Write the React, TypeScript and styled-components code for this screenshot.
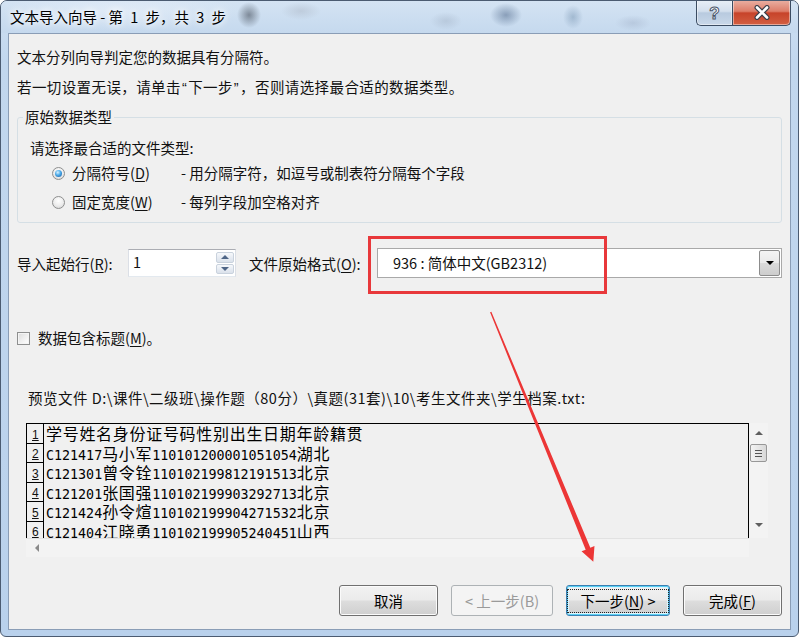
import React from "react";
import styled, { createGlobalStyle } from "styled-components";

const UI_FONT = `"Noto Sans CJK SC", "Noto Sans", sans-serif`;

const Global = createGlobalStyle`
  html, body { margin: 0; padding: 0; background: #ffffff; }
  body { font-family: ${UI_FONT}; }
  * { box-sizing: border-box; }
`;

const Window = styled.div`
  position: relative;
  width: 799px;
  height: 637px;
  display: flex;
  flex-direction: column;
  border: 1px solid #4b5b71;
  border-radius: 7px 7px 6px 6px;
  overflow: hidden;
  font-family: ${UI_FONT};
  color: #111;
  background: linear-gradient(180deg, #cfe0f2 0%, #c2d7ee 60px, #b9d1ec 100%);
`;

const TitleBar = styled.div`
  height: 32px;
  flex: none;
  display: flex;
  justify-content: space-between;
  align-items: flex-start;
  background:
    radial-gradient(ellipse 12px 13px at 248px 14px, rgba(60, 68, 80, 0.55), transparent),
    radial-gradient(ellipse 20px 9px at 300px 10px, rgba(170, 180, 195, 0.45), transparent),
    radial-gradient(ellipse 16px 9px at 445px 20px, rgba(150, 165, 185, 0.35), transparent),
    radial-gradient(ellipse 16px 12px at 505px 14px, rgba(70, 95, 130, 0.5), transparent),
    radial-gradient(ellipse 10px 12px at 572px 16px, rgba(110, 140, 170, 0.45), transparent),
    radial-gradient(ellipse 18px 8px at 632px 22px, rgba(150, 165, 190, 0.35), transparent),
    radial-gradient(ellipse 120px 20px at 120px 10px, rgba(235, 242, 250, 0.6), transparent),
    linear-gradient(180deg, #d4e3f3 0%, #c5d9ee 100%);
`;

const Title = styled.div`
  margin: 6px 0 0 9px;
  font-size: 14.5px;
  line-height: 20px;
  color: #000;
  white-space: pre;
  text-shadow: 0 0 6px #ffffff, 0 0 10px #ffffff;
`;

const Captions = styled.div`
  display: flex;
  margin: -1px 7px 0 0;
`;

const CapButton = styled.div<{ $kind: "help" | "close" }>`
  height: 26px;
  width: ${(p) => (p.$kind === "close" ? 59 : 36)}px;
  display: flex;
  align-items: center;
  justify-content: center;
  border: 1px solid #3b4c62;
  border-top: none;
  border-right: ${(p) => (p.$kind === "help" ? "none" : "1px solid #3b4c62")};
  border-radius: ${(p) => (p.$kind === "close" ? "0 0 5px 0" : "0 0 0 5px")};
  box-shadow: inset 0 0 0 1px rgba(255, 255, 255, 0.45);
  background: ${(p) =>
    p.$kind === "close"
      ? "linear-gradient(180deg, #eab1a4 0%, #dd7d69 45%, #c7432a 52%, #d35f42 100%)"
      : "linear-gradient(180deg, #e8eff7 0%, #d3dfed 45%, #b8cadf 52%, #c9d8e9 100%)"};
`;

const HelpGlyph = styled.span`
  font-family: "Liberation Sans", sans-serif;
  font-weight: bold;
  font-size: 17px;
  line-height: 1;
  color: #ffffff;
  -webkit-text-stroke: 1px #4b5669;
  margin-top: 1px;
`;

const Client = styled.div`
  flex: 1;
  margin: 0 7px 6px 7px;
  border: 1px solid #8a9db6;
  background: #f0f0f0;
  display: flex;
  flex-direction: column;
  padding: 13px 8px 13px 8px;
`;

const TextLine = styled.div<{ $mt: number; $indent?: number; $spacing?: number }>`
  margin-top: ${(p) => p.$mt}px;
  padding-left: ${(p) => p.$indent ?? 0}px;
  letter-spacing: ${(p) => p.$spacing ?? 0}px;
  height: 20px;
  line-height: 20px;
  font-size: 14.5px;
  white-space: nowrap;
`;

const Quote = styled.span`
  font-family: "Liberation Sans", sans-serif;
  padding: 0 1px;
`;

const Group = styled.fieldset`
  margin: 10px 0 0 0;
  padding: 0 12px 10px 12px;
  height: 116px;
  border: 1px solid #d5dfe5;
  border-radius: 3px;
  min-inline-size: 0;
`;

const GroupLegend = styled.legend`
  padding: 0 2px;
  margin-left: -7px;
  font-size: 14.5px;
  line-height: 20px;
`;

const OptionRow = styled.div<{ $mt: number }>`
  margin-top: ${(p) => p.$mt}px;
  height: 20px;
  display: flex;
  align-items: center;
  padding-left: 22px;
  font-size: 14.5px;
  line-height: 20px;
  white-space: nowrap;
`;

const Radio = styled.span<{ $checked?: boolean }>`
  position: relative;
  flex: none;
  width: 13px;
  height: 13px;
  border-radius: 50%;
  border: 1px solid #8e8f8f;
  background: radial-gradient(circle at 50% 35%, #ffffff 0%, #ececec 55%, #cfcfcf 100%);
  &::after {
    content: "";
    display: ${(p) => (p.$checked ? "block" : "none")};
    position: absolute;
    left: 2px;
    top: 2px;
    width: 7px;
    height: 7px;
    border-radius: 50%;
    background: radial-gradient(circle at 40% 35%, #d8f2ff 0%, #49a9e8 45%, #17549c 100%);
  }
`;

const OptionName = styled.span`
  width: 109px;
  margin-left: 7px;
`;

const Accel = styled.u`
  text-underline-offset: 2px;
`;

const FieldRow = styled.div`
  margin-top: 25px;
  height: 30px;
  display: flex;
  align-items: center;
  font-size: 14.5px;
  white-space: nowrap;
`;

const FieldLabel = styled.span<{ $w: number; $ml?: number }>`
  width: ${(p) => p.$w}px;
  margin-left: ${(p) => p.$ml ?? 0}px;
  flex: none;
`;

const SpinBox = styled.div`
  width: 108px;
  height: 28px;
  flex: none;
  display: flex;
  align-items: stretch;
  background: #ffffff;
  border: 1px solid #dbdfe6;
  border-top-color: #abadb3;
  border-bottom-color: #e3e9ef;
  padding: 2px 1px 2px 4px;
`;

const SpinValue = styled.span`
  flex: 1;
  font-size: 14.5px;
  line-height: 20px;
`;

const SpinButtons = styled.div`
  width: 18px;
  display: flex;
  flex-direction: column;
  gap: 1px;
`;

const SpinBtn = styled.div<{ $dir: "up" | "down" }>`
  flex: 1;
  display: flex;
  align-items: center;
  justify-content: center;
  border: 1px solid #c9d2dd;
  border-radius: 2px;
  background: linear-gradient(180deg, #f6f8fb 0%, #e6ebf2 55%, #dbe2eb 100%);
  &::before {
    content: "";
    border-left: 4px solid transparent;
    border-right: 4px solid transparent;
    ${(p) => (p.$dir === "up" ? "border-bottom: 4px solid #4e6586;" : "border-top: 4px solid #4e6586;")}
  }
`;

const Combo = styled.div`
  flex: 1;
  height: 30px;
  display: flex;
  align-items: stretch;
  background: #ffffff;
  border: 1px solid #a9a9a9;
  padding: 1px;
`;

const ComboValue = styled.span`
  flex: 1;
  padding-left: 14px;
  font-size: 14.5px;
  line-height: 26px;
`;

const ComboButton = styled.div`
  width: 21px;
  display: flex;
  align-items: center;
  justify-content: center;
  border: 1px solid #8c8c8c;
  border-radius: 2px;
  background: linear-gradient(180deg, #f4f4f4 0%, #e9e9e9 50%, #dadada 51%, #cdcdcd 100%);
  &::before {
    content: "";
    border-left: 4px solid transparent;
    border-right: 4px solid transparent;
    border-top: 4px solid #000;
  }
`;

const CheckRow = styled.div`
  margin-top: 50px;
  height: 20px;
  display: flex;
  align-items: center;
  font-size: 14.5px;
  line-height: 20px;
  white-space: nowrap;
`;

const CheckBox = styled.span`
  flex: none;
  width: 13px;
  height: 13px;
  border: 1px solid #8e8f8f;
  background: linear-gradient(135deg, #dcdcdc 0%, #f6f6f6 70%, #ffffff 100%);
  box-shadow: inset 0 0 0 1px #f4f4f4;
  margin-right: 8px;
`;

const PreviewFrame = styled.div`
  margin: 15px 0 0 9px;
  width: 742px;
  height: 134px;
  display: grid;
  grid-template-columns: 1fr 19px;
  grid-template-rows: 115px 19px;
`;

const PreviewGrid = styled.div`
  border: 1px solid #000;
  border-bottom: none;
  overflow: hidden;
  background: #f0f0f0;
`;

const PreviewRow = styled.div`
  height: 19.5px;
  display: flex;
`;

const RowNum = styled.div`
  width: 17px;
  flex: none;
  border-right: 1px solid #000;
  border-bottom: 1px solid #000;
  display: flex;
  align-items: flex-end;
  padding: 0 0 1px 5px;
  font-family: "Liberation Sans", sans-serif;
  font-size: 12px;
  line-height: 13px;
  text-decoration: underline;
`;

const RowText = styled.div`
  padding-left: 2px;
  font-family: "DejaVu Sans Mono", monospace;
  font-size: 13.33px;
  line-height: 19.5px;
  white-space: nowrap;
  color: #000;
`;

const Han = styled.span`
  font-family: "Noto Sans CJK SC", sans-serif;
  font-size: 16px;
  line-height: 19px;
  letter-spacing: 0.7px;
`;

const VScroll = styled.div`
  background: #f3f3f3;
  display: flex;
  flex-direction: column;
  align-items: center;
  padding: 0 1px;
`;

const Arrow = styled.span<{ $dir: "up" | "down" | "left" }>`
  width: 0;
  height: 0;
  ${(p) =>
    p.$dir === "up"
      ? "border-left: 4px solid transparent; border-right: 4px solid transparent; border-bottom: 4px solid #5f5f5f; margin-top: 8px;"
      : p.$dir === "down"
      ? "border-left: 4px solid transparent; border-right: 4px solid transparent; border-top: 4px solid #5f5f5f; margin-top: auto; margin-bottom: 11px;"
      : "border-top: 4px solid transparent; border-bottom: 4px solid transparent; border-right: 4px solid #8a8a8a; margin-left: 9px;"}
`;

const Thumb = styled.div`
  margin-top: 9px;
  width: 17px;
  height: 18px;
  border: 1px solid #979797;
  border-radius: 2px;
  background: linear-gradient(90deg, #f3f3f3 0%, #e6e6e6 50%, #d8d8d8 100%);
  display: flex;
  flex-direction: column;
  align-items: center;
  justify-content: center;
  gap: 2px;
`;

const Grip = styled.span`
  width: 7px;
  height: 1px;
  background: #555;
`;

const HScroll = styled.div`
  background: #f3f3f3;
  border-top: 1px solid #e2e2e2;
  display: flex;
  align-items: center;
`;

const Corner = styled.div`
  background: #f0f0f0;
`;

const ButtonBar = styled.div`
  margin-top: 28px;
  height: 31px;
  display: flex;
  justify-content: flex-end;
  gap: 13px;
`;

const DlgButton = styled.div<{ $w: number; $state?: "default" | "disabled" }>`
  width: ${(p) => p.$w}px;
  height: 31px;
  display: flex;
  align-items: center;
  justify-content: center;
  border-radius: 3px;
  font-size: 14.5px;
  white-space: nowrap;
  border: 1px solid
    ${(p) => (p.$state === "default" ? "#3c7fb1" : p.$state === "disabled" ? "#adb2b5" : "#707070")};
  color: ${(p) => (p.$state === "disabled" ? "#9a9a9a" : "#000")};
  background: ${(p) =>
    p.$state === "disabled"
      ? "#f4f4f4"
      : "linear-gradient(180deg, #f2f2f2 0%, #ebebeb 48%, #dddddd 52%, #cfcfcf 100%)"};
  box-shadow: ${(p) =>
    p.$state === "default"
      ? "inset 0 0 0 1px #58d0f5, inset 0 0 0 2px #dff3fb"
      : p.$state === "disabled"
      ? "none"
      : "inset 0 0 0 1px #fbfbfb"};
`;

const FocusRect = styled.span`
  padding: 1px 12px;
  outline: 1px dotted #222;
  outline-offset: 0;
  line-height: 20px;
`;

const Overlay = styled.svg`
  position: absolute;
  left: -1px;
  top: -1px;
  width: 799px;
  height: 637px;
  pointer-events: none;
`;

const previewRows = [
  "学号姓名身份证号码性别出生日期年龄籍贯",
  "C121417马小军110101200001051054湖北",
  "C121301曾令铨110102199812191513北京",
  "C121201张国强110102199903292713北京",
  "C121424孙令煊110102199904271532北京",
  "C121404江晓勇110102199905240451山西",
];

function renderRuns(s: string) {
  return s
    .split(/([\u4e00-\u9fff]+)/)
    .filter(Boolean)
    .map((part, i) =>
      /[\u4e00-\u9fff]/.test(part) ? <Han key={i}>{part}</Han> : <span key={i}>{part}</span>
    );
}

export default function App() {
  return (
    <>
      <Global />
      <Window>
        <TitleBar>
          <Title>{"文本导入向导 - 第\u20021\u2002步，共\u20023\u2002步"}</Title>
          <Captions>
            <CapButton $kind="help">
              <HelpGlyph>?</HelpGlyph>
            </CapButton>
            <CapButton $kind="close">
              <svg width="18" height="15" viewBox="0 0 18 15">
                <path d="M4 2.5 L14 12.5 M14 2.5 L4 12.5" stroke="#3a3f4a" strokeWidth="5" strokeLinecap="round" />
                <path d="M4 2.5 L14 12.5 M14 2.5 L4 12.5" stroke="#ffffff" strokeWidth="2.6" strokeLinecap="round" />
              </svg>
            </CapButton>
          </Captions>
        </TitleBar>
        <Client>
          <TextLine $mt={0}>文本分列向导判定您的数据具有分隔符。</TextLine>
          <TextLine $mt={10} $spacing={0.4}>
            若一切设置无误，请单击<Quote>“</Quote>下一步<Quote>”</Quote>，否则请选择最合适的数据类型。
          </TextLine>
          <Group>
            <GroupLegend>原始数据类型</GroupLegend>
            <TextLine $mt={11}>请选择最合适的文件类型:</TextLine>
            <OptionRow $mt={5}>
              <Radio $checked />
              <OptionName>
                分隔符号(<Accel>D</Accel>)
              </OptionName>
              <span>- 用分隔字符，如逗号或制表符分隔每个字段</span>
            </OptionRow>
            <OptionRow $mt={9}>
              <Radio />
              <OptionName>
                固定宽度(<Accel>W</Accel>)
              </OptionName>
              <span>- 每列字段加空格对齐</span>
            </OptionRow>
          </Group>
          <FieldRow>
            <FieldLabel $w={111}>
              导入起始行(<Accel>R</Accel>):
            </FieldLabel>
            <SpinBox>
              <SpinValue>1</SpinValue>
              <SpinButtons>
                <SpinBtn $dir="up" />
                <SpinBtn $dir="down" />
              </SpinButtons>
            </SpinBox>
            <FieldLabel $w={128} $ml={13}>
              文件原始格式(<Accel>O</Accel>):
            </FieldLabel>
            <Combo>
              <ComboValue>936 : 简体中文(GB2312)</ComboValue>
              <ComboButton />
            </Combo>
          </FieldRow>
          <CheckRow>
            <CheckBox />
            <span>
              数据包含标题(<Accel>M</Accel>)。
            </span>
          </CheckRow>
          <TextLine $mt={40} $indent={11} $spacing={0.5}>
            {"预览文件 D:\\课件\\二级班\\操作题（80分）\\真题(31套)\\10\\考生文件夹\\学生档案.txt:"}
          </TextLine>
          <PreviewFrame>
            <PreviewGrid>
              {previewRows.map((r, i) => (
                <PreviewRow key={i}>
                  <RowNum>{i + 1}</RowNum>
                  <RowText>{renderRuns(r)}</RowText>
                </PreviewRow>
              ))}
            </PreviewGrid>
            <VScroll>
              <Arrow $dir="up" />
              <Thumb>
                <Grip />
                <Grip />
                <Grip />
              </Thumb>
              <Arrow $dir="down" />
            </VScroll>
            <HScroll>
              <Arrow $dir="left" />
            </HScroll>
            <Corner />
          </PreviewFrame>
          <ButtonBar>
            <DlgButton $w={99}>取消</DlgButton>
            <DlgButton $w={102} $state="disabled">
              &lt; 上一步(B)
            </DlgButton>
            <DlgButton $w={104} $state="default">
              <FocusRect>
                下一步(<Accel>N</Accel>) &gt;
              </FocusRect>
            </DlgButton>
            <DlgButton $w={99}>
              完成(<Accel>F</Accel>)
            </DlgButton>
          </ButtonBar>
        </Client>
        <Overlay viewBox="0 0 799 637">
          <rect x="369.5" y="237.5" width="236" height="55" fill="none" stroke="#e8383b" strokeWidth="3" />
          <polygon
            points="491.35,311.74 590.31,547.76 594.48,546.05 593.3,561.7 581.53,551.35 585.69,549.65 490.05,312.26"
            fill="#ec3636"
          />
        </Overlay>
      </Window>
    </>
  );
}
